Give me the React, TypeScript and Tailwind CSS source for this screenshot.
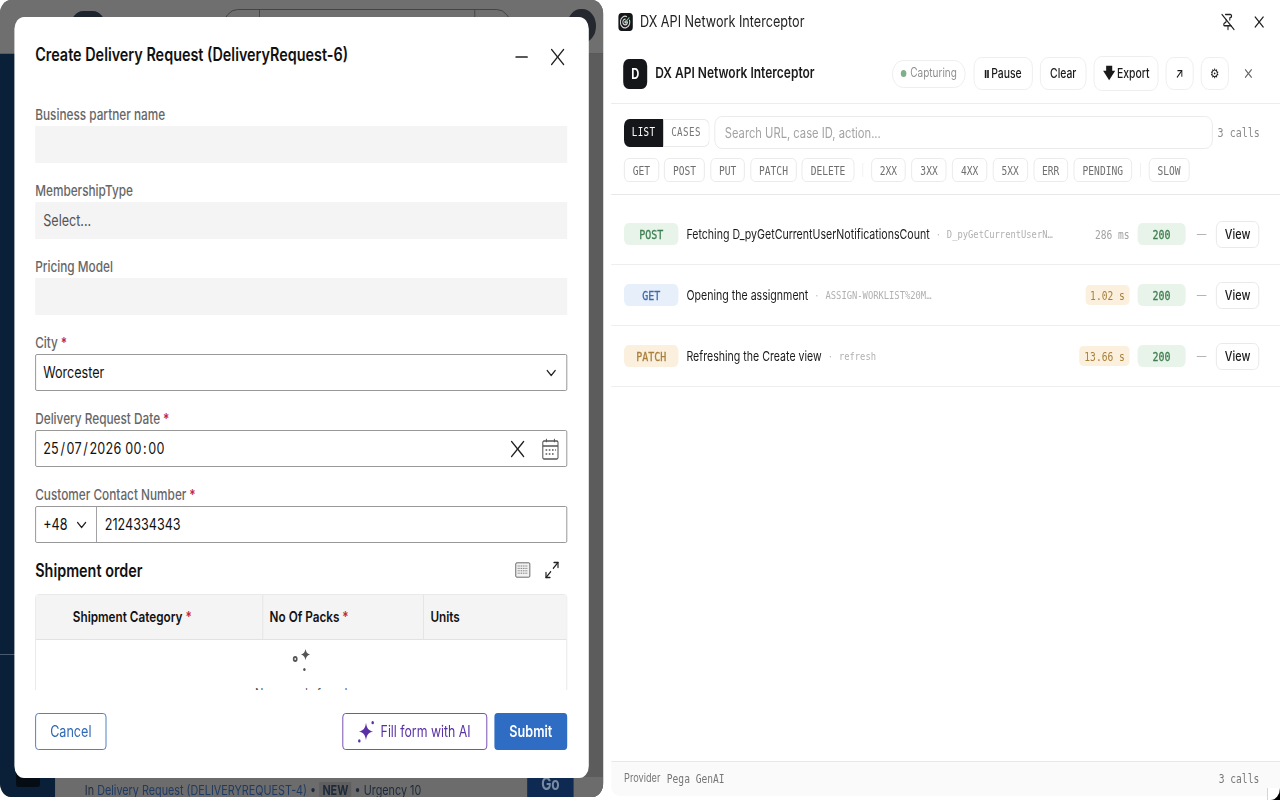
import { ChevronDown, Maximize2, Minus, PinOff, X } from "lucide-react";

// the reference is a capture squeezed to 80% in width, so the page is laid out
// 1600 wide and squeezed once at the root
const mono = "font-['DejaVu_Sans_Mono',monospace]";
const medium = "[-webkit-text-stroke:0.3px]";

function Label({ text, required }: { text: string; required?: boolean }) {
    return (
        <div className="h-[21px] text-[14.750px] leading-[20px] font-medium text-[#666666]">
            {text}
            {required && <span className="text-[#c2283a] font-semibold"> *</span>}
        </div>
    );
}

function Sparkle({ size, className }: { size: number; className?: string }) {
    return (
        <svg width={size} height={size} viewBox="0 0 24 24" className={className} fill="currentColor">
            <path d="M11 3c1 5 3.500 7.500 9 9-5.500 1.500-8 4-9 9-1-5-3.500-7.500-9-9 5.500-1.500 8-4 9-9z" />
        </svg>
    );
}

function AiSparkle() {
    return (
        <svg width="25" height="25" viewBox="0 0 24 24" fill="currentColor">
            <path d="M12 3.500c1 5.500 3 7.500 8.500 8.500-5.500 1-7.500 3-8.500 8.500-1-5.500-3-7.500-8.500-8.500 5.500-1 7.500-3 8.500-8.500z" />
            <circle cx="20" cy="3.500" r="1.500" />
            <circle cx="4" cy="21" r="1.500" />
        </svg>
    );
}

function CalendarIcon() {
    return (
        <svg width="24" height="24" viewBox="0 0 24 24" fill="none" stroke="#555555" strokeWidth="1.300">
            <rect x="2.500" y="4" width="19" height="18" rx="1.500" />
            <path d="M2.500 9h19M7 1.800v3.500M17 1.800v3.500" />
            <path d="M6 13h2M10 13h2M14 13h2M18 13h1M6 17h2M10 17h2M14 17h2" strokeWidth="1.600" />
        </svg>
    );
}

function KeyboardGrid() {
    return (
        <svg width="21" height="16" viewBox="0 0 24 20" fill="none" stroke="#555555" strokeWidth="1.200">
            <rect x="1" y="1" width="22" height="18" rx="1.500" fill="#f2f2f2" />
            <path d="M4 5h16M4 8h16M4 11h16M4 14h16" strokeDasharray="1.500 1.200" />
        </svg>
    );
}

function Radar() {
    return (
        <svg width="14" height="14" viewBox="0 0 24 24" fill="none" stroke="#d5d5d5" strokeWidth="2.200">
            <path d="M20 8a10 10 0 1 1-5-5" />
            <path d="M16 11a5 5 0 1 1-4-4" />
            <circle cx="12" cy="12" r="1.500" fill="#d5d5d5" />
            <path d="M12 12l8-8" stroke="#7fc48f" />
        </svg>
    );
}

function BackgroundApp() {
    return (
        <div className="w-[754px] h-[797px] shrink-0 rounded-[14px] overflow-hidden flex flex-col bg-[#5c5c5c]">
            <div className="h-[54px] shrink-0 bg-[#6f6f6f] border-b border-[#5a5a5a] flex items-start">
                <div className="w-[44px] h-[32px] ml-[88px] mt-[11px] rounded-full bg-[#1c2430]" />
                <div className="ml-[10px] mt-[10px] text-[18px] font-bold text-[#1c2430]">PEGA</div>
                <div className="ml-[88px] mt-[9px] w-[360px] h-[40px] rounded-[18px] border border-[#3f3f3f] flex justify-between px-[44px]">
                    <div className="w-px h-full bg-[#3f3f3f]" />
                    <div className="w-px h-full bg-[#3f3f3f]" />
                </div>
                <div className="ml-[70px] mt-[9px] w-[36px] h-[34px] rounded-full bg-[#25282e]" />
            </div>
            <div className="flex-1 flex min-h-0">
                <div className="w-[69px] shrink-0 bg-[#0a2039] flex flex-col items-center pb-[10px]">
                    <div className="mt-[600px] w-full h-px bg-[#4a5a6e]" />
                    <div className="mt-auto w-[30px] h-[18px] rounded-[3px] bg-[#060c14]" />
                </div>
                <div className="flex-1 flex flex-col justify-end bg-[#5c5c5c]">
                    <div className="h-[20px] bg-[#6c6c6c] flex items-center pl-[37px] pr-[37px] justify-between text-[13.500px] text-[#1d2a3c]">
                        <div className="whitespace-nowrap mt-[6px]">
                            In <span className="text-[#1f3a63]">Delivery Request (DELIVERYREQUEST-4)</span> • <b className="bg-[#5f5f5f] px-[4px]">NEW</b> • Urgency 10
                        </div>
                        <div className="w-[58px] h-[20px] bg-[#0e2a52] text-[#7a8aa0] font-bold text-center text-[17px] leading-[14px]">Go</div>
                    </div>
                </div>
            </div>
        </div>
    );
}

function Field({ label, required, children }: { label: string; required?: boolean; children: React.ReactNode }) {
    return (
        <div>
            <Label text={label} required={required} />
            {children}
        </div>
    );
}

const grayInput = "h-[37px] bg-[#f4f4f4] flex items-center px-[10px] text-[15.750px] text-[#555555]";
const outlineInput = "h-[37px] border border-[#8c8c8c] rounded-[2px] flex items-center px-[9px] text-[15.750px] text-[#111111]";

function Modal() {
    return (
        <div className="absolute left-[18px] top-[17px] w-[718px] h-[761px] bg-white rounded-[12px] flex flex-col">
            <div className="h-[88px] shrink-0 pl-[26px] pr-[24px] pt-[26px] flex items-start justify-between">
                <div className="text-[18px] leading-[24px] font-semibold text-[#111111] whitespace-nowrap">
                    Create Delivery Request (DeliveryRequest-6)
                </div>
                <div className="flex items-center gap-[18px] -mt-[1px]">
                    <Minus size={24} strokeWidth={1.700} color="#222222" />
                    <X size={30} strokeWidth={1.300} color="#222222" />
                </div>
            </div>
            <div className="flex-1 min-h-0 overflow-hidden pl-[26px] pr-[27px]">
                <div className="flex flex-col gap-[18px]">
                    <Field label="Business partner name">
                        <div className={grayInput} />
                    </Field>
                    <Field label="MembershipType">
                        <div className={grayInput}>Select...</div>
                    </Field>
                    <Field label="Pricing Model">
                        <div className={grayInput} />
                    </Field>
                    <Field label="City" required>
                        <div className={`${outlineInput} justify-between`}>
                            Worcester
                            <ChevronDown size={20} strokeWidth={1.800} color="#222222" />
                        </div>
                    </Field>
                    <Field label="Delivery Request Date" required>
                        <div className={`${outlineInput} justify-between pr-[8px]`}>
                            <span className="whitespace-pre tracking-[0.300px]">{"25\u200a/\u200a07\u200a/\u200a2026 00\u200a:\u200a00"}</span>
                            <div className="flex items-center gap-[14px]">
                                <X size={30} strokeWidth={1.300} color="#222222" />
                                <CalendarIcon />
                            </div>
                        </div>
                    </Field>
                    <Field label="Customer Contact Number" required>
                        <div className="h-[37px] border border-[#8c8c8c] rounded-[2px] flex items-center text-[15.750px] text-[#111111]">
                            <div className="w-[76px] h-full border-r border-[#8c8c8c] pl-[9px] flex items-center gap-[8px]">
                                +48
                                <ChevronDown size={20} strokeWidth={1.800} color="#222222" />
                            </div>
                            <div className="pl-[10px]">2124334343</div>
                        </div>
                    </Field>
                </div>
                <div className="mt-[15px] h-[24px] flex items-center justify-between pr-[9px]">
                    <div className="text-[18px] font-semibold text-[#111111]">Shipment order</div>
                    <div className="flex items-center gap-[16px]">
                        <KeyboardGrid />
                        <Maximize2 size={20} strokeWidth={1.800} color="#222222" />
                    </div>
                </div>
                <div className="mt-[12px] border border-[#e6e6e6] rounded-t-[4px] h-[140px]">
                    <div className="h-[45px] bg-[#f4f4f4] border-b border-[#e2e2e2] flex text-[14.700px] font-semibold text-[#111111]">
                        <div className="w-[284px] border-r border-[#e2e2e2] pl-[46px] flex items-center">
                            Shipment Category<span className="text-[#c2283a]">&nbsp;*</span>
                        </div>
                        <div className="w-[201px] border-r border-[#e2e2e2] pl-[8px] flex items-center">
                            No Of Packs<span className="text-[#c2283a]">&nbsp;*</span>
                        </div>
                        <div className="pl-[8px] flex items-center">Units</div>
                    </div>
                    <div className="flex flex-col items-center pt-[7px] text-[#555555]">
                        <div className="relative w-[30px] h-[30px]">
                            <Sparkle size={15} className="absolute right-[2px] top-0" />
                            <div className="absolute left-[4px] top-[9px] w-[6px] h-[6px] rounded-full border-2 border-[#555555]" />
                            <div className="absolute left-[17px] top-[21px] w-[3px] h-[3px] rounded-full bg-[#555555]" />
                        </div>
                        <div className="mt-[6px] text-[14px] whitespace-nowrap">No records found</div>
                    </div>
                </div>
            </div>
            <div className="h-[88px] shrink-0 pl-[26px] pr-[27px] pt-[23px] flex justify-between items-start text-[15.750px]">
                <div className="w-[89px] h-[37px] rounded-[4px] border border-[#3f74bb] text-[#2f68b4] flex items-center justify-center">Cancel</div>
                <div className="flex gap-[9px]">
                    <div className="w-[181px] h-[37px] pr-[4px] rounded-[4px] border border-[#6a3fa5] text-[#5930a6] text-[15.400px] flex items-center justify-center gap-[6px]">
                        <AiSparkle />
                        Fill form with AI
                    </div>
                    <div className="w-[91px] h-[37px] rounded-[4px] bg-[#2f6cc4] text-white font-semibold flex items-center justify-center">Submit</div>
                </div>
            </div>
        </div>
    );
}

const headBtn = "h-[33px] rounded-[10px] border border-[#ececec] flex items-center justify-center text-[13px] font-medium text-[#1a1a1a] shrink-0";

function InterceptorHeader() {
    return (
        <div className="h-[62px] border-b border-[#ececec] shrink-0 pt-[2px] pl-[15px] pr-[32px] flex items-center">
            <div className="w-[30px] h-[30px] rounded-[7px] bg-[#15161a] text-white font-bold text-[14px] flex items-center justify-center">D</div>
            <div className="ml-[10px] text-[15px] font-semibold text-[#1a1a1a] whitespace-nowrap">DX API Network Interceptor</div>
            <div className="ml-auto flex items-center">
                <div className="w-[92px] h-[28px] rounded-full border border-[#ececec] flex items-center justify-center gap-[5px] text-[12.500px] text-[#8f8f8f]">
                    <span className="w-[7px] h-[7px] rounded-full bg-[#7fb08a]" />
                    Capturing
                </div>
                <div className={`${headBtn} ml-[10px] w-[74px] gap-[3px]`}>
                    <span className="flex gap-[1px]">
                        <span className="w-[2px] h-[8px] bg-[#1a1a1a]" />
                        <span className="w-[2px] h-[8px] bg-[#1a1a1a]" />
                    </span>
                    Pause
                </div>
                <div className={`${headBtn} ml-[9px] w-[58px]`}>Clear</div>
                <div className={`${headBtn} ml-[9px] w-[81px] h-[35px] gap-[3px]`}>
                    <span className="text-[15px] font-bold">🡇</span>Export
                </div>
                <div className={`${headBtn} ml-[9px] w-[35px]`}>↗</div>
                <div className={`${headBtn} ml-[9px] w-[35px] text-[11px]`}>⚙</div>
                <X size={15} strokeWidth={2} color="#666666" className="ml-[17px]" />
            </div>
        </div>
    );
}

function Chip({ text }: { text: string }) {
    return (
        <div className={`${mono} h-[24px] pt-[1px] px-[10px] rounded-[6px] border border-[#e9e9e9] flex items-center text-[12px] text-[#6f6f6f]`}>
            {text}
        </div>
    );
}

function Toolbar() {
    return (
        <div className="shrink-0 pl-[16px] pr-[26px] pt-[12px] pb-[12px] border-b border-[#e8e8e8]">
            <div className="h-[33px] flex items-center">
                <div className={`${mono} flex h-[29px] pt-px text-[11.500px] tracking-[0.500px]`}>
                    <div className="w-[49px] bg-[#15161a] text-white rounded-l-[7px] flex items-center justify-center">LIST</div>
                    <div className="w-[58px] border border-l-0 border-[#e9e9e9] rounded-r-[7px] text-[#777777] flex items-center justify-center">CASES</div>
                </div>
                <div className="ml-[6px] flex-1 h-[33px] rounded-[9px] border border-[#e9e9e9] pl-[12px] flex items-center text-[14px] text-[#a3a3a3]">
                    Search URL, case ID, action...
                </div>
                <div className={`${mono} ml-[6px] w-[52px] mt-[2px] text-[12.500px] text-[#8a8a8a] whitespace-nowrap`}>3 calls</div>
            </div>
            <div className="mt-[9px] flex items-center">
                <div className="flex gap-[6.500px]">
                    {["GET", "POST", "PUT", "PATCH", "DELETE"].map((t) => <Chip key={t} text={t} />)}
                </div>
                <div className="w-px h-[14px] bg-[#eeeeee] mx-[10px]" />
                <div className="flex gap-[7px]">
                    {["2XX", "3XX", "4XX", "5XX", "ERR", "PENDING"].map((t) => <Chip key={t} text={t} />)}
                </div>
                <div className="w-px h-[14px] bg-[#eeeeee] mx-[10px]" />
                <Chip text="SLOW" />
            </div>
        </div>
    );
}

type Call = {
    method: string;
    methodClass: string;
    title: string;
    sub: string;
    time: string;
    slow: boolean;
};

const calls: Call[] = [
    { method: "POST", methodClass: "bg-[#e8f3ea] text-[#3f7f50]", title: "Fetching D_pyGetCurrentUserNotificationsCount", sub: "D_pyGetCurrentUserN…", time: "286 ms", slow: false },
    { method: "GET", methodClass: "bg-[#e7effb] text-[#3d69ad]", title: "Opening the assignment", sub: "ASSIGN-WORKLIST%20M…", time: "1.02 s", slow: true },
    { method: "PATCH", methodClass: "bg-[#faf0dd] text-[#a97f3a]", title: "Refreshing the Create view", sub: "refresh", time: "13.66 s", slow: true },
];

function CallRow({ call }: { call: Call }) {
    return (
        <div className="h-[61px] border-b border-[#eeeeee] pl-[16px] pr-[26px] flex items-center">
            <div className={`${mono} ${medium} ${call.methodClass} w-[68px] h-[22px] pt-[2px] rounded-[6px] text-[12.500px] flex items-center justify-center`}>
                {call.method}
            </div>
            <div className="ml-[10px] mt-[2px] text-[13.250px] text-[#1a1a1a] whitespace-nowrap">{call.title}</div>
            <div className="mx-[9px] mt-[2px] text-[#b5b5b5] text-[12px]">·</div>
            <div className={`${mono} mt-[3px] text-[11px] text-[#b0b0b0] whitespace-nowrap`}>{call.sub}</div>
            <div className={`${mono} ml-auto pt-[1px] text-[12px] h-[20px] flex items-center rounded-[5px] ${call.slow ? "bg-[#faf0dd] text-[#a97f3a] px-[6px]" : "text-[#a3a3a3]"}`}>
                {call.time}
            </div>
            <div className={`${mono} ${medium} ml-[10px] w-[60px] h-[22px] pt-[2px] rounded-[6px] bg-[#e8f3ea] text-[#3f7f50] text-[12.500px] flex items-center justify-center`}>
                200
            </div>
            <div className="ml-[14px] w-[12px] h-px bg-[#b5b5b5]" />
            <div className="ml-[12px] w-[54px] h-[27px] rounded-[7px] border border-[#e6e6e6] text-[13.500px] font-medium text-[#1a1a1a] flex items-center justify-center">
                View
            </div>
        </div>
    );
}

function Interceptor() {
    return (
        <div className="relative ml-[10px] flex-1 bg-white flex flex-col">
            <div className="h-[42px] shrink-0 pt-[1px] pl-[9px] pr-[20px] flex items-center text-[15.800px] text-[#222222]">
                <div className="w-[18px] h-[18px] rounded-[4px] bg-[#15161a] flex items-center justify-center">
                    <Radar />
                </div>
                <div className="ml-[9px] whitespace-nowrap">DX API Network Interceptor</div>
                <PinOff size={18} strokeWidth={1.800} color="#222222" className="ml-auto" />
                <X size={20} strokeWidth={1.700} color="#222222" className="ml-[20px] -mr-[4px]" />
            </div>
            <InterceptorHeader />
            <Toolbar />
            <div className="flex-1 min-h-0 pt-[9px]">
                {calls.map((c) => <CallRow key={c.method} call={c} />)}
            </div>
            <div className={`${mono} h-[35px] shrink-0 mb-[4px] border-t border-[#e8e8e8] bg-[#fafafa] rounded-b-[10px] pl-[16px] pr-[26px] flex items-center justify-between text-[12px] text-[#777777]`}>
                <div className="flex items-center gap-[8px]">
                    <span className="font-['Inter',sans-serif] text-[11.500px]">Provider</span>
                    <span>Pega GenAI</span>
                </div>
                <div>3 calls</div>
            </div>
            {/* rounded window corner over the black desktop */}
            <div className="absolute right-0 bottom-0 w-[16px] h-[12px] bg-black">
                <div className="w-full h-full bg-white rounded-br-[14px]" />
            </div>
        </div>
    );
}

export default function App() {
    return (
        <div className="w-[1280px] h-[800px] overflow-hidden bg-white">
            <div className="relative w-[1600px] h-[800px] origin-top-left scale-x-[0.8] flex font-['Inter',sans-serif]">
                <BackgroundApp />
                <Modal />
                <Interceptor />
            </div>
        </div>
    );
}
